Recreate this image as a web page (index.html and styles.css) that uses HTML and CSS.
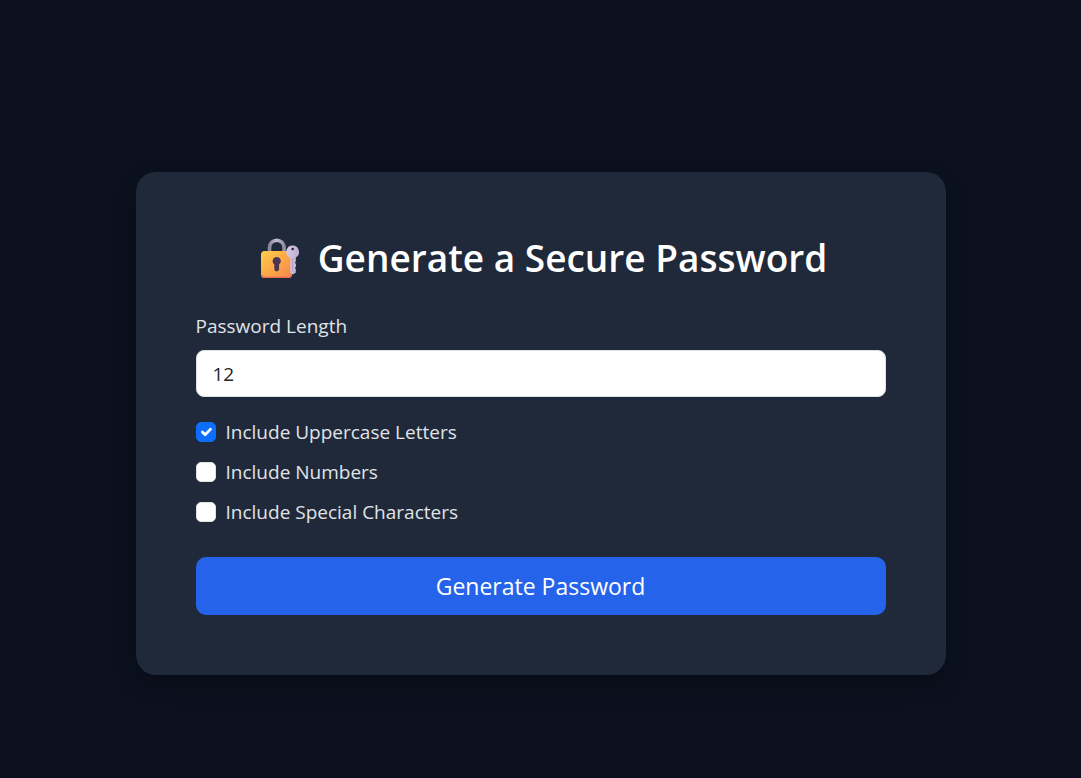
FILE: index.html
```html
<!DOCTYPE html>
<html lang="en">
<head>
    <meta charset="UTF-8">
    <meta name="viewport" content="width=device-width, initial-scale=1">
    <title>Password Generator</title>
    <link rel="stylesheet" href="styles.css">
</head>
<body>
    <main class="generator-card">
        <h1 class="title">
            <svg class="title-icon" viewBox="-6 0 46 40" aria-hidden="true">
                <defs>
                    <linearGradient id="lockBody" x1="0" y1="0" x2="1" y2="1">
                        <stop offset="0" stop-color="#ffce4a"/>
                        <stop offset="0.5" stop-color="#fda947"/>
                        <stop offset="1" stop-color="#f58450"/>
                    </linearGradient>
                    <linearGradient id="shackle" x1="0" y1="0" x2="1" y2="0">
                        <stop offset="0" stop-color="#8c8698"/>
                        <stop offset="0.5" stop-color="#c4bdce"/>
                        <stop offset="1" stop-color="#918a9d"/>
                    </linearGradient>
                    <linearGradient id="keyFill" x1="0" y1="0" x2="1" y2="0">
                        <stop offset="0" stop-color="#d8cae6"/>
                        <stop offset="1" stop-color="#bcadd0"/>
                    </linearGradient>
                </defs>
                <path d="M9.500 15V9.500a7.300 7.300 0 0 1 14.600 0V15" fill="none" stroke="url(#shackle)" stroke-width="3.600"/>
                <rect x="1" y="13" width="31" height="27" rx="3.500" fill="url(#lockBody)"/>
                <path d="M1.800 37Q2.800 39.400 5 39.400H28.500Q30.500 39.400 31.500 37" fill="none" stroke="#e96a57" stroke-width="1.100"/>
                <path d="M16.700 19a4.100 4.100 0 0 0-2.400 7.400V31a2.400 2.400 0 0 0 4.800 0v-4.600a4.100 4.100 0 0 0-2.400-7.400z" fill="#4b3555"/>
                <path fill-rule="evenodd" d="M32.700 7.500a6.500 6.500 0 0 0-2.400 12.500V34.500l2.700 2 2.800-2v-3.500l-.9-1.200 1.100-1.300v-2.500l-1.100-1.200 .9-1.200V19.600A6.500 6.500 0 0 0 32.700 7.500zm0 2.300a1.300 1.300 0 1 1 0 2.600 1.300 1.300 0 0 1 0-2.600z" fill="url(#keyFill)"/>
                <path d="M32.500 20v14" stroke="#a99bbd" stroke-width="0.800"/>
            </svg>
            Generate a Secure Password
        </h1>

        <form class="generator-form">
            <label class="form-label" for="length">Password Length</label>
            <input class="form-input" type="number" id="length" value="12" min="4" max="64">

            <div class="options">
                <div class="form-check">
                    <input class="check-input" type="checkbox" id="uppercase" checked>
                    <label for="uppercase">Include Uppercase Letters</label>
                </div>
                <div class="form-check">
                    <input class="check-input" type="checkbox" id="numbers">
                    <label for="numbers">Include Numbers</label>
                </div>
                <div class="form-check">
                    <input class="check-input" type="checkbox" id="special">
                    <label for="special">Include Special Characters</label>
                </div>
            </div>

            <button class="generate-btn" type="button">Generate Password</button>
        </form>
    </main>
</body>
</html>
```

FILE: styles.css
```css
* {
    box-sizing: border-box;
    margin: 0;
    padding: 0;
}

body {
    min-height: 100vh;
    padding: 172px 20px 40px;
    background-color: #0b111f;
    color: #e0e3e8;
    font-family: "Segoe UI", "Open Sans", "Noto Sans", sans-serif;
    font-size: 19px;
    line-height: 30px;
}

.generator-card {
    max-width: 810px;
    margin: 0 auto;
    padding: 60px;
    background-color: #1f293a;
    border-radius: 20px;
    box-shadow: 0 10px 25px rgba(0, 0, 0, 0.3);
}

.title {
    display: flex;
    justify-content: center;
    align-items: center;
    gap: 18px;
    margin-bottom: 27px;
    color: #fff;
    font-size: 37px;
    font-weight: 600;
    line-height: 52px;
}

.title-icon {
    flex-shrink: 0;
    width: 46px;
    height: 40px;
}

.generator-form {
    display: flex;
    flex-direction: column;
}

.form-label {
    margin-bottom: 9px;
}

.form-input {
    width: 100%;
    height: 47px;
    padding: 8px 16px;
    border: 1px solid #dee2e6;
    border-radius: 8px;
    background-color: #fff;
    color: #212529;
    font: inherit;
    appearance: textfield;
}

.form-input::-webkit-inner-spin-button {
    appearance: none;
}

.options {
    display: flex;
    flex-direction: column;
    gap: 10px;
    margin: 20px 0 30px;
}

.form-check {
    display: flex;
    align-items: center;
    gap: 10px;
}

.check-input {
    appearance: none;
    width: 20px;
    height: 20px;
    border: 1px solid #dee2e6;
    border-radius: 5px;
    background-color: #fff;
}

.check-input:checked {
    border-color: #0d6efd;
    background: #0d6efd url("data:image/svg+xml,%3Csvg xmlns='http://www.w3.org/2000/svg' viewBox='0 0 20 20'%3E%3Cpath fill='none' stroke='%23fff' stroke-linecap='round' stroke-linejoin='round' stroke-width='3' d='m6 10 3 3 6-6'/%3E%3C/svg%3E") center / contain no-repeat;
}

.generate-btn {
    padding: 10px;
    border: 0;
    border-radius: 10px;
    background-color: #2563eb;
    color: #fff;
    font-family: inherit;
    font-size: 23px;
    line-height: 38px;
    cursor: pointer;
}

.generate-btn:hover {
    background-color: #1d4ed8;
}
```
